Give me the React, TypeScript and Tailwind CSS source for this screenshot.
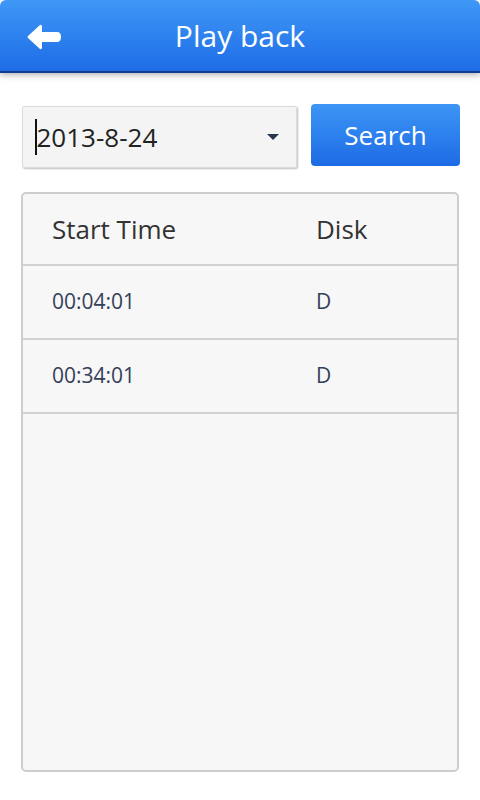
import React from "react";

export default function App() {
  const rows = [
    { t: "00:04:01", d: "D" },
    { t: "00:34:01", d: "D" },
  ];
  return (
    <div
      className="w-[480px] h-[800px] bg-white flex flex-col overflow-hidden"
      style={{ fontFamily: '"Open Sans", "Noto Sans", sans-serif' }}
    >
      <div className="relative h-[73px] shrink-0 rounded-t-[6px] bg-gradient-to-b from-[#3f97f6] to-[#1e6ce6] border-b-[2px] border-[#0f3f8c] shadow-[0_2px_6px_rgba(0,0,0,0.3)] flex items-center justify-center">
        <svg
          className="absolute left-[26px] top-[24px]"
          width="36"
          height="26"
          viewBox="0 0 36 26"
        >
          <path
            d="M14 1 L2 12 Q1 13 2 14 L14 25 Q16 26 16 23 L16 18 L31 18 Q35 18 35 13 Q35 8 31 8 L16 8 L16 3 Q16 0 14 1 Z"
            fill="#ffffff"
          />
        </svg>
        <span className="text-white text-[30px] leading-none">Play back</span>
      </div>

      <div className="flex items-start pl-[22px] pr-[20px] pt-[31px] gap-[14px]">
        <div className="mt-[2px] w-[275px] shrink-0 h-[62px] bg-[#f4f4f4] border border-[#dcdcdc] rounded-[2px] shadow-[1px_1px_2px_rgba(0,0,0,0.25)] flex items-center pl-[12px] pr-[17px]">
          <div className="w-[1.5px] h-[36px] bg-[#111]" />
          <span className="text-[26px] text-[#222] leading-none flex-1">2013-8-24</span>
          <svg width="12" height="6" viewBox="0 0 12 6">
            <path d="M0 0 L12 0 L6 6 Z" fill="#2a3650" />
          </svg>
        </div>
        <div className="w-[149px] shrink-0 h-[62px] rounded-[4px] bg-gradient-to-b from-[#3d95f5] to-[#1e6be5] flex items-center justify-center text-white text-[26px] leading-none">
          Search
        </div>
      </div>

      <div className="mx-[21px] mt-[24px] h-[580px] bg-[#f7f7f7] border-[2px] border-[#cdcdcd] rounded-[5px] flex flex-col">
        <div className="h-[72px] flex items-center border-b-[2px] border-[#d2d2d2] text-[26px] text-[#333] shrink-0">
          <span className="pl-[29px] w-[293px]">Start Time</span>
          <span>Disk</span>
        </div>
        {rows.map((r) => (
          <div
            key={r.t}
            className="h-[74px] flex items-center border-b-[2px] border-[#d2d2d2] text-[21px] text-[#34405a] shrink-0"
          >
            <span className="pl-[29px] w-[293px]">{r.t}</span>
            <span>{r.d}</span>
          </div>
        ))}
      </div>
    </div>
  );
}
